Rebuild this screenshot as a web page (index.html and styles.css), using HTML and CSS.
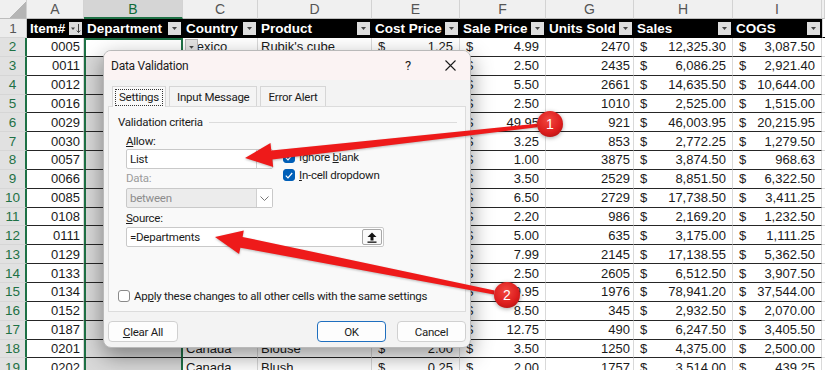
FILE: index.html
```html
<!DOCTYPE html>
<html lang="en">
<head>
  <meta charset="UTF-8" />
  <title>Data Validation</title>
  <link rel="stylesheet" href="styles.css">
</head>
<body>

  <!-- Worksheet grid, filled by the script below -->
  <div id="sheet" class="sheet"></div>

  <!-- Data Validation dialog -->
  <div class="dlg">
    <div class="dlg-title">
      <span class="dlg-name">Data Validation</span>
      <span class="tbtn">?</span>
      <span class="tbtn close">
        <svg width="11" height="11" viewBox="0 0 11 11"><path d="M0.5 0.5L10.5 10.5M10.5 0.5L0.5 10.5" stroke="#1b1b1b" stroke-width="1.1" fill="none"/></svg>
      </span>
    </div>
    <div class="dlg-body">
      <div class="tabs">
        <div class="tab on"><span class="focus">Settings</span></div>
        <div class="tab">Input Message</div>
        <div class="tab">Error Alert</div>
      </div>
      <div class="panel">
        <div class="legend">Validation criteria</div>
        <div class="crit">
          <div class="crit-top">
            <div class="crit-left">
              <div class="lbl"><u>A</u>llow:</div>
              <div class="combo">
                <span class="val">List</span>
                <span class="drop"><svg width="9" height="5" viewBox="0 0 9 5"><path d="M0.5 0.5L4.5 4.5L8.5 0.5" stroke="#555" fill="none"/></svg></span>
              </div>
              <div class="lbl dis">Data:</div>
              <div class="combo dis">
                <span class="val">between</span>
                <span class="drop"><svg width="9" height="5" viewBox="0 0 9 5"><path d="M0.5 0.5L4.5 4.5L8.5 0.5" stroke="#777" fill="none"/></svg></span>
              </div>
            </div>
            <div class="crit-right">
              <div class="chk"><span class="box on"><svg width="8" height="7" viewBox="0 0 8 7"><path d="M0.8 3.6L3 5.8L7.2 1" stroke="#fff" stroke-width="1.2" fill="none"/></svg></span><span>Ignore <u>b</u>lank</span></div>
              <div class="chk"><span class="box on"><svg width="8" height="7" viewBox="0 0 8 7"><path d="M0.8 3.6L3 5.8L7.2 1" stroke="#fff" stroke-width="1.2" fill="none"/></svg></span><span><u>I</u>n-cell dropdown</span></div>
            </div>
          </div>
          <div class="lbl src-lbl"><u>S</u>ource:</div>
          <div class="src">
            <span class="val">=Departments</span>
            <span class="pick"><svg width="10" height="11" viewBox="0 0 10 11"><path d="M5 0.5L9.5 5H6.5V8.5H3.5V5H0.5Z" fill="#111"/><rect x="0.5" y="9.5" width="9" height="1.3" fill="#111"/></svg></span>
          </div>
        </div>
        <div class="chk apply"><span class="box"></span><span>Ap<u>p</u>ly these changes to all other cells with the same settings</span></div>
      </div>
      <div class="btns">
        <button class="btn clear"><u>C</u>lear All</button>
        <button class="btn def">OK</button>
        <button class="btn">Cancel</button>
      </div>
    </div>
  </div>

  <!-- Numbered callout arrows -->
  <svg class="callouts" width="825" height="370" viewBox="0 0 825 370">
    <defs>
      <radialGradient id="dot" cx="0.45" cy="0.35" r="0.7">
        <stop offset="0" stop-color="#f2463f"/>
        <stop offset="0.7" stop-color="#dc1d1d"/>
        <stop offset="1" stop-color="#b81414"/>
      </radialGradient>
    </defs>
    <g class="arrow">
      <polygon points="245,158 273.2,166.9 272.3,159.5 537.3,127.2 536.9,123.7 271.3,150.5 270.5,143.1"/>
      <polygon points="215,237 239.1,254 240.4,247.7 493.9,294.4 494.6,290.5 242.6,236.9 243.8,230.5"/>
    </g>
    <circle class="dot" cx="550" cy="124" r="13" fill="url(#dot)"/>
    <text class="dot-num" x="550" y="129">1</text>
    <circle class="dot" cx="507" cy="295" r="13" fill="url(#dot)"/>
    <text class="dot-num" x="507" y="300">2</text>
  </svg>

  <script>
    // Table headers and rows (Item#, Country, Product, Cost, Sale, Units, Sales, COGS).
    const heads = ["Item#", "Department", "Country", "Product", "Cost Price", "Sale Price", "Units Sold", "Sales", "COGS"];
    const rows = [
      ["0005", "Mexico", "Rubik's cube", "1.25", "4.99", "2470", "12,325.30", "3,087.50"],
      ["0011", "USA", "Yo-yo", "1.20", "2.50", "2435", "6,086.25", "2,921.40"],
      ["0012", "Canada", "Puzzle", "4.00", "5.50", "2661", "14,635.50", "10,644.00"],
      ["0016", "Mexico", "Chalk", "1.50", "2.50", "1010", "2,525.00", "1,515.00"],
      ["0029", "USA", "Board game", "21.95", "49.95", "921", "46,003.95", "20,215.95"],
      ["0030", "Canada", "Kite", "1.50", "3.25", "853", "2,772.25", "1,279.50"],
      ["0057", "USA", "Marbles", "0.25", "1.00", "3875", "3,874.50", "968.63"],
      ["0066", "Mexico", "Crayons", "2.50", "3.50", "2529", "8,851.50", "6,322.50"],
      ["0085", "Canada", "Frisbee", "1.25", "6.50", "2729", "17,738.50", "3,411.25"],
      ["0108", "USA", "Stickers", "1.25", "2.20", "986", "2,169.20", "1,232.50"],
      ["0111", "Mexico", "Notebook", "1.75", "5.00", "635", "3,175.00", "1,111.25"],
      ["0129", "USA", "Scarf", "2.50", "7.99", "2145", "17,138.55", "5,362.50"],
      ["0133", "Canada", "Socks", "1.50", "2.50", "2605", "6,512.50", "3,907.50"],
      ["0134", "USA", "Jacket", "19.00", "39.95", "1976", "78,941.20", "37,544.00"],
      ["0152", "Mexico", "Hat", "6.00", "8.50", "345", "2,932.50", "2,070.00"],
      ["0187", "Canada", "Gloves", "6.95", "12.75", "490", "6,247.50", "3,405.50"],
      ["0201", "Canada", "Blouse", "2.00", "3.50", "1250", "4,375.00", "2,500.00"],
      ["0202", "Canada", "Blush", "0.25", "2.00", "1757", "3,514.00", "439.25"]
    ];

    const filterBtn = '<span class="fb"><svg width="13" height="13" viewBox="0 0 13 13"><path d="M4 5H9L6.5 8Z" fill="#444"/></svg></span>';
    const sortBtn = '<span class="fb"><svg width="13" height="13" viewBox="0 0 13 13"><path d="M2 5.5H6L4 8Z" fill="#444"/><path d="M9.5 2V10.5M7.8 8.6L9.5 10.5L11.2 8.6" stroke="#444" fill="none"/></svg></span>';
    const dvBtn = '<span class="dv-btn"><svg width="12" height="12" viewBox="0 0 12 12"><path d="M3.5 5H8.5L6 7.8Z" fill="#444"/></svg></span>';

    const sheet = document.getElementById("sheet");

    // Append one grid cell.
    function add(cls, html) {
      const d = document.createElement("div");
      d.className = "c " + cls;
      d.innerHTML = html || "";
      sheet.appendChild(d);
      return d;
    }

    // Accounting format: dollar sign on the left, amount on the right.
    function money(v) {
      return "<span>$</span><span>" + v + "</span>";
    }

    // Column letters
    add("corner");
    "ABCDEFGHI".split("").forEach(l => add(l === "B" ? "ch on" : "ch", l));
    add("ch pad");

    // Table header row
    add("rh", "1");
    heads.forEach((h, i) => add("th", "<span>" + h + "</span>" + (i === 0 ? sortBtn : filterBtn)));
    add("th pad");

    // Data rows
    rows.forEach((r, i) => {
      add("rh on", i + 2);
      add("num", r[0]);
      add(i === 0 ? "b act" : "b", "");
      const country = add("", r[1]);
      if (i === 0) {
        country.classList.add("dv");
        country.insertAdjacentHTML("afterbegin", dvBtn);
      }
      add("", r[2]);
      add("acct", money(r[3]));
      add("acct", money(r[4]));
      add("num", r[5]);
      add("acct", money(r[6]));
      add("acct", money(r[7]));
      add("pad");
    });
  </script>
</body>
</html>
```

FILE: styles.css
```css
* {
  box-sizing: border-box;
  margin: 0;
  padding: 0;
}
html, body {
  width: 825px;
  height: 370px;
  overflow: hidden;
  background: #fff;
  font-family: "Liberation Sans", Arial, sans-serif;
}

/* Worksheet */
.sheet {
  display: grid;
  grid-template-columns: 27px 57px 99px 75px 114px 88px 86px 88px 99px 89px 3px;
  grid-template-rows: 19px 19px;
  grid-auto-rows: 18.85px;
}
.c {
  display: flex;
  align-items: center;
  padding: 0 3px;
  font-size: 13px;
  color: #1a1a1a;
  white-space: nowrap;
  overflow: hidden;
  background: #fff;
  border-right: 1px solid #d9d9d9;
  border-bottom: 1px solid #262626;
}
.num {
  justify-content: flex-end;
}
.acct {
  justify-content: space-between;
  padding: 0 6px;
}
.pad {
  padding: 0;
  border-right: none;
  border-bottom: 1px solid #d9d9d9;
}

/* Column letters */
.corner {
  background: linear-gradient(135deg, #f0f0f0 62%, #b5b5b5 62%);
  border-right: 1px solid #d0d0d0;
  border-bottom: 1px solid #bdbdbd;
  padding: 0;
}
.ch {
  justify-content: center;
  background: #f0f0f0;
  color: #555;
  font-size: 14px;
  border-right: 1px solid #d3d3d3;
  border-bottom: 1px solid #bdbdbd;
}
.ch.on {
  background: #d5d5d5;
  color: #0f6b38;
  border-bottom: 2px solid #1e7145;
}
.ch.pad {
  background: #f0f0f0;
}

/* Row numbers */
.rh {
  justify-content: center;
  background: #ececec;
  color: #555;
  font-size: 13.5px;
  border-right: 1px solid #c4c4c4;
  border-bottom: 1px solid #d6d6d6;
}
.rh.on {
  background: #e1e1e1;
  color: #1e7145;
  border-right: 2px solid #1e7145;
}

/* Black table header row */
.th {
  justify-content: space-between;
  padding: 0 2px 0 3px;
  background: #000;
  color: #fff;
  font-weight: bold;
  font-size: 13.5px;
  border-right: none;
  border-bottom: 1px solid #000;
}
.th.pad {
  background: #fff;
  border-left: 1px solid #d9d9d9;
}
.fb {
  flex: none;
  width: 13px;
  height: 13px;
  background: #dedede;
  display: flex;
}

/* Selected range in column B */
.b {
  background: #d9d9d9;
  border-left: 2px solid #1e7145;
  border-right: 2px solid #1e7145;
}
.b.act {
  background: #fff;
  border-top: 2px solid #1e7145;
}
.dv {
  position: relative;
}
.dv-btn {
  position: absolute;
  left: 2px;
  top: 1px;
  width: 13px;
  height: 16px;
  background: #e4e4e4;
  border: 1px solid #b8b8b8;
  display: flex;
  align-items: center;
  justify-content: center;
}

/* Dialog */
.dlg {
  position: absolute;
  left: 103px;
  top: 50px;
  width: 368px;
  height: 298px;
  display: flex;
  flex-direction: column;
  background: #f3f3f3;
  border: 1px solid #b9b9b9;
  border-radius: 8px;
  overflow: hidden;
  box-shadow: 0 8px 22px rgba(0, 0, 0, 0.42);
  font-family: Roboto, "Liberation Sans", sans-serif;
  font-size: 11.5px;
  letter-spacing: -0.25px;
  color: #1b1b1b;
}
.dlg-title {
  flex: none;
  height: 29px;
  display: flex;
  align-items: center;
  padding-left: 7px;
  background: #fbf3f3;
}
.dlg-name {
  flex: 1;
  font-size: 12px;
}
.tbtn {
  width: 44px;
  height: 29px;
  display: flex;
  align-items: center;
  justify-content: center;
  font-size: 13px;
}
.tbtn.close {
  width: 40px;
}
.dlg-body {
  flex: 1;
  display: flex;
  flex-direction: column;
  padding: 6px 4px 5px;
}
.tabs {
  display: flex;
  gap: 3px;
  height: 20px;
  padding-left: 4px;
}
.tab {
  display: flex;
  align-items: center;
  padding: 0 7px;
  background: #f4f4f4;
  border: 1px solid #d6d6d6;
  border-bottom: none;
}
.tab.on {
  position: relative;
  height: 21px;
  padding: 0 2px;
  background: #f9f9f9;
  z-index: 1;
}
.focus {
  border: 1px dotted #333;
  padding: 0 3px;
  line-height: 15px;
}
.panel {
  height: 206px;
  display: flex;
  flex-direction: column;
  padding: 8px 8px 8px 9px;
  background: #f9f9f9;
  border: 1px solid #dcdcdc;
}
.legend {
  display: flex;
  align-items: center;
  gap: 6px;
  line-height: 14px;
}
.legend::after {
  content: "";
  flex: 1;
  border-top: 1px solid #dcdcdc;
}
.crit {
  margin: 5px 0 0 8px;
}
.crit-top {
  display: flex;
  gap: 10px;
}
.crit-left {
  width: 147px;
}
.crit-right {
  display: flex;
  flex-direction: column;
  gap: 4px;
  padding-top: 16px;
}
.lbl {
  line-height: 14px;
}
.lbl.dis {
  margin-top: 2px;
  color: #9c9c9c;
}
.src-lbl {
  margin-top: 3px;
}
.combo, .src {
  height: 20px;
  display: flex;
  align-items: center;
  margin-top: 1px;
  background: #fff;
  border: 1px solid #c9c9c9;
  border-radius: 2px;
}
.combo.dis {
  margin-top: 3px;
  background: #ececec;
  color: #8c8c8c;
}
.val {
  flex: 1;
  padding-left: 3px;
}
.drop {
  width: 16px;
  height: 100%;
  display: flex;
  align-items: center;
  justify-content: center;
  background: #fff;
  border-left: 1px solid #d0d0d0;
}
.src {
  width: 258px;
  margin-top: 2px;
}
.pick {
  width: 20px;
  height: 16px;
  margin-right: 1px;
  display: flex;
  align-items: center;
  justify-content: center;
  background: #fafafa;
  border: 1px solid #a8a8a8;
  border-radius: 2px;
}
.chk {
  display: flex;
  align-items: center;
  line-height: 14px;
}
.box {
  flex: none;
  width: 12px;
  height: 12px;
  margin-right: 4px;
  display: flex;
  align-items: center;
  justify-content: center;
  background: #fff;
  border: 1px solid #8a8a8a;
  border-radius: 3px;
}
.box.on {
  background: #005fb8;
  border-color: #005fb8;
}
.apply {
  margin-top: auto;
}
.btns {
  display: flex;
  gap: 11px;
  margin-top: 9px;
}
.btn {
  width: 69px;
  height: 21px;
  font: inherit;
  color: inherit;
  letter-spacing: inherit;
  background: #fdfdfd;
  border: 1px solid #d0d0d0;
  border-radius: 4px;
}
.btn.clear {
  width: 70px;
  margin-right: auto;
}
.btn.def {
  border-color: #1f6fbf;
}

/* Callouts */
.callouts {
  position: absolute;
  left: 0;
  top: 0;
  pointer-events: none;
}
.arrow {
  fill: #ee1a1a;
  filter: drop-shadow(0 1px 1px rgba(0, 0, 0, 0.25));
}
.dot {
  filter: drop-shadow(0 1px 2px rgba(0, 0, 0, 0.35));
}
.dot-num {
  fill: #fff;
  font-family: "Liberation Sans", Arial, sans-serif;
  font-size: 14px;
  text-anchor: middle;
}
```
